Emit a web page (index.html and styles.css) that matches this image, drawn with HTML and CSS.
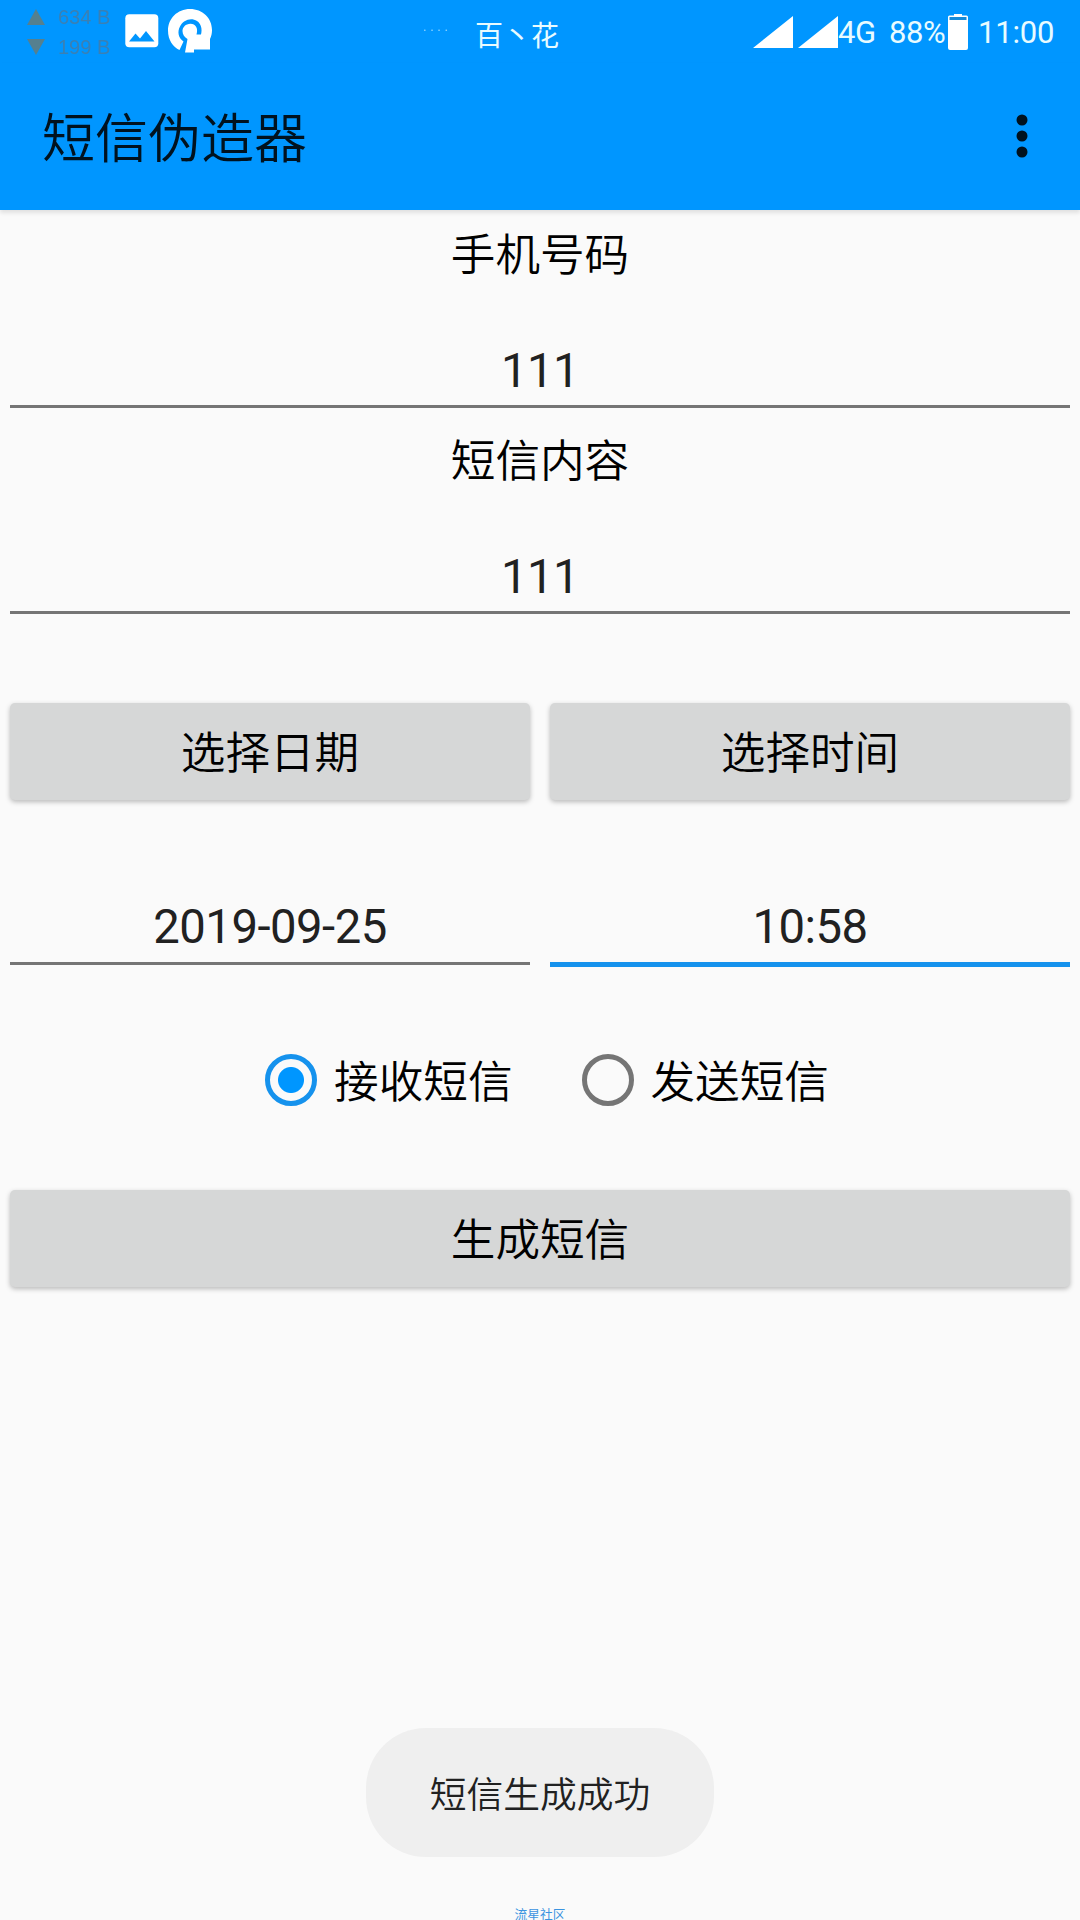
FILE: index.html
```html
<!DOCTYPE html>
<html lang="zh-CN">
<head>
    <meta charset="UTF-8">
    <meta name="viewport" content="width=device-width, initial-scale=1.0">
    <title>短信伪造器</title>
    <link rel="stylesheet" href="styles.css">
</head>
<body>
    <div class="status-bar">
        <div class="net-speed">
            <div class="speed-row"><svg width="20" height="16" viewBox="0 0 20 16"><path d="M10 0L19 16H1z"/></svg><span>634 B</span></div>
            <div class="speed-row"><svg width="20" height="16" viewBox="0 0 20 16"><path d="M1 0h18L10 16z"/></svg><span>199 B</span></div>
        </div>
        <svg class="picture-icon" width="34" height="34" viewBox="0 0 34 34">
            <rect x="0.3" y="0.3" width="33" height="33" rx="4" fill="#fff"/>
            <path d="M4 27.5L10.5 19.5L15 24.5L21 17L29.5 27.5z" fill="#0096ff"/>
        </svg>
        <svg class="app-icon" width="46" height="46" viewBox="0 0 46 46">
            <path d="M23 1C10.500 1 1 10.500 1 22.500C1 32 6 39 12.500 42L16.500 33.500C11.500 30 10 24 13 18.500C16 12 24 9 30 13C34 15.500 35.500 21 34 26.500H29.500C31.500 20 28.500 15.800 23.500 15.800C18.500 15.800 15.500 19.500 15.500 23C15.500 26.500 17.500 29.500 20.500 31L18 44.500H27V41.500H43V31C44.500 28 45 25 45 22C45 10 35.500 1 23 1z" fill="#fff"/>
        </svg>
        <div class="carrier"><span class="dots">· · · ·</span><span>百丶花</span></div>
        <div class="status-right">
            <svg width="85" height="32" viewBox="0 0 85 32"><path d="M0 32L40 0V32zM45 32L85 0V32z" fill="#fff"/></svg>
            <span class="network">4G</span>
            <span class="percent">88%</span>
            <svg class="battery" width="20" height="36" viewBox="0 0 20 36">
                <path d="M6 0h8v1.500h4.500q1.500 0 1.500 1.500v31q0 2-2 2H2q-2 0-2-2V3q0-1.500 1.500-1.500H6z" fill="#fff"/>
                <path d="M1.500 3h17v3h-17z" fill="#168bd9"/>
            </svg>
            <span class="clock">11:00</span>
        </div>
    </div>

    <div class="app-bar">
        <h1>短信伪造器</h1>
        <svg width="12" height="44" viewBox="0 0 12 44"><circle cx="6" cy="6" r="5.500"/><circle cx="6" cy="22" r="5.500"/><circle cx="6" cy="38" r="5.500"/></svg>
    </div>

    <div class="form">
        <label class="label" for="phone">手机号码</label>
        <input class="field" type="text" id="phone" value="111">
        <label class="label" for="content">短信内容</label>
        <input class="field" type="text" id="content" value="111">

        <div class="columns buttons">
            <button>选择日期</button>
            <button>选择时间</button>
        </div>
        <div class="columns">
            <input class="field" type="text" value="2019-09-25">
            <input class="field active" type="text" value="10:58">
        </div>

        <div class="radio-container">
            <label class="radio"><input type="radio" name="type" checked><span>接收短信</span></label>
            <label class="radio"><input type="radio" name="type"><span>发送短信</span></label>
        </div>
        <button>生成短信</button>
    </div>

    <div class="toast">短信生成成功</div>
    <div class="community">流星社区</div>
</body>
</html>
```
FILE: styles.css
```css
* {
    box-sizing: border-box;
}

body {
    margin: 0;
    height: 1920px;
    overflow: hidden;
    display: flex;
    flex-direction: column;
    background: #fafafa;
    color: #000;
    font-family: Roboto, 'Noto Sans CJK SC', sans-serif;
}

h1,
button,
.label,
.radio,
.toast {
    font-family: 'Noto Sans CJK SC', sans-serif;
    font-weight: 350;
}

svg {
    display: block;
    flex: none;
}

.status-bar {
    flex: none;
    display: flex;
    align-items: flex-start;
    height: 63px;
    padding-left: 26px;
    background: #0096ff;
    color: #e8fbff;
    white-space: nowrap;
}

.net-speed {
    width: 99px;
    padding-top: 2px;
    color: #3a80b4;
    font: 20px/30px 'Liberation Sans', Arial, sans-serif;
    filter: blur(0.7px);
}

.speed-row {
    display: flex;
    align-items: center;
    gap: 12px;
}

.speed-row svg {
    fill: #55808f;
}

.picture-icon {
    margin-top: 14px;
}

.app-icon {
    margin: 8px 0 0 8px;
}

.carrier {
    display: flex;
    width: 540px;
    padding-left: 210px;
    font-size: 28px;
    line-height: 40px;
    margin-top: 17px;
}

.dots {
    width: 52px;
    font-size: 14px;
    line-height: 29px;
    opacity: 0.6;
}

.status-right {
    display: flex;
    font-size: 31px;
    line-height: 37px;
    padding-top: 14px;
}

.status-right > svg:first-child {
    margin-top: 2px;
}

.network {
    width: 51px;
    letter-spacing: -0.4px;
}

.percent {
    width: 59px;
    letter-spacing: -0.4px;
}

.clock {
    margin-left: 10px;
    letter-spacing: -0.2px;
}

.app-bar {
    flex: none;
    display: flex;
    align-items: center;
    justify-content: space-between;
    height: 147px;
    padding: 0 52px 1px 42px;
    background: #0096ff;
    box-shadow: 0 3px 4px rgba(0, 0, 0, 0.1);
}

.app-bar h1 {
    margin: 0;
    padding-bottom: 3px;
    color: #00121f;
    font-size: 53px;
    line-height: 78px;
}

.app-bar svg {
    fill: #00121f;
}

.form {
    display: flex;
    flex-direction: column;
    padding: 10px;
}

.label {
    height: 66px;
    line-height: 64px;
    text-align: center;
    font-size: 44.625px;
}

.field {
    width: 100%;
    height: 122px;
    margin-bottom: 18px;
    padding: 50px 0 0;
    border: none;
    border-bottom: 3px solid #757575;
    border-radius: 0;
    outline: none;
    background: none;
    color: #212121;
    text-align: center;
    font-family: inherit;
    font-size: 47.25px;
    letter-spacing: -0.5px;
}

button {
    width: 100%;
    height: 97px;
    padding: 0 0 5px;
    border: none;
    border-radius: 5px;
    background: #d6d7d7;
    color: #000;
    font-size: 44.625px;
    box-shadow: 0 2px 5px rgba(0, 0, 0, 0.26);
}

.columns {
    display: grid;
    grid-template-columns: 1fr 1fr;
    gap: 20px;
}

.columns .field {
    padding-top: 48px;
}

.buttons {
    margin: 71px 0 43px;
}

.field.active {
    height: 124px;
    border-bottom: 5px solid #1592ed;
    margin-bottom: 16px;
}

.radio-container {
    display: flex;
    justify-content: center;
    gap: 69px;
    height: 66px;
    margin: 64px 0 77px;
    padding-left: 14px;
}

.radio {
    display: flex;
    align-items: center;
    gap: 17px;
    font-size: 44.625px;
}

.radio span {
    padding-bottom: 4px;
}

.radio input {
    appearance: none;
    width: 52px;
    height: 52px;
    margin: 0;
    border: 5px solid #757575;
    border-radius: 50%;
}

.radio input:checked {
    border-color: #1592ed;
    background: radial-gradient(circle, #0096ff 12.5px, transparent 13.5px);
}

.toast {
    align-self: center;
    width: 348px;
    height: 129px;
    margin-top: auto;
    border-radius: 60px;
    background: #efefef;
    color: #212121;
    text-align: center;
    font-size: 36.75px;
    line-height: 128px;
}

.community {
    flex: none;
    height: 63px;
    padding-top: 48px;
    color: #3b94e0;
    text-align: center;
    font-size: 12.75px;
    line-height: 19px;
}
```
